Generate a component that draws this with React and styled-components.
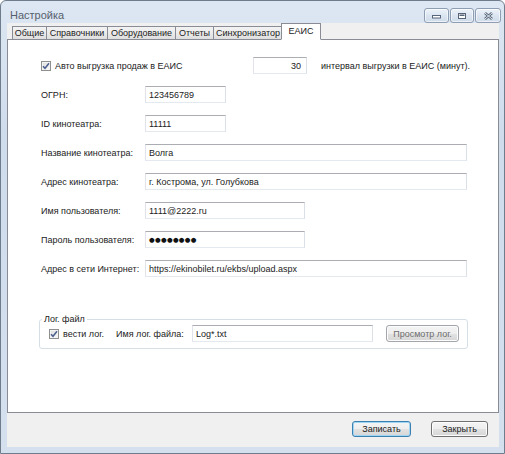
import React from 'react';
import styled, { createGlobalStyle } from 'styled-components';

const Global = createGlobalStyle`
  html, body { margin: 0; padding: 0; background: #fff; }
  body {
    font-family: "Liberation Sans", Arial, sans-serif;
    font-size: 9px;
    color: #222;
  }
  * { box-sizing: border-box; }
`;

const Window = styled.div`
  width: 505px;
  height: 454px;
  display: flex;
  flex-direction: column;
  background: linear-gradient(#dde7f3, #cfdcec 30%, #d4e0ee);
  border: 1px solid #6f7c8c;
  border-radius: 6px 6px 0 0;
  padding: 0 5px 6px 6px;
`;

const TitleBar = styled.div`
  height: 22px;
  display: flex;
  align-items: flex-start;
  justify-content: space-between;
`;

const Title = styled.div`
  margin: 8px 0 0 3px;
  font-size: 11px;
  color: #56606c;
`;

const CaptionGroup = styled.div`
  display: flex;
  margin: 7px -2px 0 0;
  gap: 1px;
`;

const CaptionButton = styled.div`
  width: ${p => p.$w}px;
  height: 15px;
  border: 1px solid #8d9db2;
  border-radius: 3px;
  background: linear-gradient(#eef3f9, #dbe5f1 50%, #cfdbe9);
  box-shadow: inset 0 0 0 1px rgba(255,255,255,0.6);
  display: flex;
  align-items: center;
  justify-content: center;
`;

const Client = styled.div`
  flex: 1;
  display: flex;
  flex-direction: column;
  background: #f0f0f0;
`;

const TabStrip = styled.div`
  height: 17px;
  display: flex;
  align-items: flex-end;
  padding-left: 5px;
  position: relative;
  z-index: 1;
`;

const Tab = styled.div`
  width: ${p => p.$w}px;
  height: ${p => (p.$active ? 17 : 14)}px;
  margin: ${p => (p.$active ? '0 -2px 0 -2px' : '0 0 0 -1px')};
  border: 1px solid #898c95;
  border-bottom: ${p => (p.$active ? '1px solid #fff' : '1px solid #898c95')};
  background: ${p => (p.$active ? '#fff' : 'linear-gradient(#f3f3f3, #ebebeb 50%, #dedede)')};
  display: flex;
  justify-content: center;
  align-items: ${p => (p.$active ? 'flex-start' : 'center')};
  padding-top: ${p => (p.$active ? '2px' : '0')};
  font-size: 9px;
  color: #222;
  white-space: nowrap;
  &:first-child { margin-left: 0; }
`;

const Panel = styled.div`
  flex: 1;
  background: #fff;
  border: 1px solid #898c95;
  margin-top: -1px;
  padding: 17px 0 0 33px;
`;

const Form = styled.div`
  display: flex;
  flex-direction: column;
  gap: 12px;
`;

const Row = styled.div`
  display: flex;
  align-items: center;
  height: 17px;
`;

const Label = styled.div`
  width: ${p => p.$w || 104}px;
  white-space: nowrap;
`;

const TextBox = styled.div`
  width: ${p => p.$w}px;
  height: 17px;
  border: 1px solid;
  border-color: #abadb3 #dbdfe6 #e3e9ef #e2e3ea;
  background: #fff;
  padding: 0 ${p => (p.$right ? 5 : 3)}px 0 3px;
  display: flex;
  align-items: center;
  justify-content: ${p => (p.$right ? 'flex-end' : 'flex-start')};
  white-space: nowrap;
  overflow: hidden;
  color: #222;
`;

const Dots = styled.span`
  font-family: "DejaVu Sans", sans-serif;
  font-size: 6.5px;
  letter-spacing: 0.3px;
  color: #111;
`;

const CheckItem = styled.label`
  width: ${p => p.$w}px;
  display: flex;
  align-items: center;
  gap: 4px;
  white-space: nowrap;
`;

const Box = styled.span`
  width: 10px;
  height: 10px;
  border: 1px solid #8e8f8f;
  background: linear-gradient(135deg, #dcdcdc, #fafafa);
  box-shadow: inset 0 0 0 1px #f4f4f4;
  display: inline-flex;
  align-items: center;
  justify-content: center;
  flex: none;
`;

const Note = styled.div`
  margin-left: 14px;
  white-space: nowrap;
`;

const Group = styled.fieldset`
  margin: 36px 0 0 -2px;
  width: 429px;
  border: 1px solid #d5dfe5;
  border-radius: 3px;
  padding: 0 0 6px 9px;
`;

const Legend = styled.legend`
  padding: 0 2px;
  margin-left: -7px;
  font-size: 9px;
  height: 12px;
  line-height: 12px;
  color: #222;
`;

const Button = styled.div`
  width: ${p => p.$w}px;
  height: ${p => p.$h || 16}px;
  margin-left: ${p => p.$ml || 0}px;
  border: 1px solid ${p => (p.$default ? '#3c7fb1' : p.$disabled ? '#a3a7ab' : '#707070')};
  border-radius: 3px;
  background: linear-gradient(#f4f4f4, #eeeeee 50%, #e2e2e2 51%, #d6d6d6);
  box-shadow: inset 0 0 0 1px ${p => (p.$default ? '#9fd6f3' : '#fcfcfc')};
  display: flex;
  align-items: center;
  justify-content: center;
  font-size: 9px;
  color: ${p => (p.$disabled ? '#6d6d6d' : '#222')};
  white-space: nowrap;
`;

const Footer = styled.div`
  height: 34px;
  display: flex;
  justify-content: flex-end;
  align-items: flex-start;
  gap: 20px;
  padding: 8px 11px 0 0;
`;

const Check = () => (
  <Box>
    <svg width="8" height="8" viewBox="0 0 8 8">
      <path d="M1 4.2 L3 6.3 L7 1.2" fill="none" stroke="#4b5f8e" strokeWidth="1.5" />
    </svg>
  </Box>
);

const tabs = [
  ['Общие', 35],
  ['Справочники', 62],
  ['Оборудование', 69],
  ['Отчеты', 39],
  ['Синхронизатор', 70],
  ['ЕАИС', 40],
];

export default function App() {
  return (
    <>
      <Global />
      <Window>
        <TitleBar>
          <Title>Настройка</Title>
          <CaptionGroup>
            <CaptionButton $w={25}>
              <svg width="11" height="7" viewBox="0 0 11 7">
                <rect x="1.5" y="3.5" width="8" height="2.5" fill="#fff" stroke="#56657a" />
              </svg>
            </CaptionButton>
            <CaptionButton $w={24}>
              <svg width="10" height="8" viewBox="0 0 10 8">
                <rect x="1.5" y="1.5" width="7" height="5" fill="#fff" stroke="#56657a" />
                <rect x="2.5" y="2.5" width="5" height="1.5" fill="#56657a" />
              </svg>
            </CaptionButton>
            <CaptionButton $w={26}>
              <svg width="11" height="8" viewBox="0 0 11 8">
                <path d="M2 1 L9 7 M9 1 L2 7" stroke="#56657a" strokeWidth="2.6" />
                <path d="M2 1 L9 7 M9 1 L2 7" stroke="#f6f8fb" strokeWidth="0.9" />
              </svg>
            </CaptionButton>
          </CaptionGroup>
        </TitleBar>
        <Client>
          <TabStrip>
            {tabs.map(([t, w]) => (
              <Tab key={t} $w={w} $active={t === 'ЕАИС'}>{t}</Tab>
            ))}
          </TabStrip>
          <Panel>
            <Form>
              <Row>
                <CheckItem $w={212}><Check />Авто выгрузка продаж в ЕАИС</CheckItem>
                <TextBox $w={54} $right>30</TextBox>
                <Note>интервал выгрузки в ЕАИС (минут).</Note>
              </Row>
              <Row><Label>ОГРН:</Label><TextBox $w={81}>123456789</TextBox></Row>
              <Row><Label>ID кинотеатра:</Label><TextBox $w={81}>11111</TextBox></Row>
              <Row><Label>Название кинотеатра:</Label><TextBox $w={322}>Волга</TextBox></Row>
              <Row><Label>Адрес кинотеатра:</Label><TextBox $w={322}>г. Кострома, ул. Голубкова</TextBox></Row>
              <Row><Label>Имя пользователя:</Label><TextBox $w={160}>1111@2222.ru</TextBox></Row>
              <Row><Label>Пароль пользователя:</Label><TextBox $w={160}><Dots>●●●●●●●●</Dots></TextBox></Row>
              <Row><Label>Адрес в сети Интернет:</Label><TextBox $w={322}>https://ekinobilet.ru/ekbs/upload.aspx</TextBox></Row>
            </Form>
            <Group>
              <Legend>Лог. файл</Legend>
              <Row>
                <CheckItem $w={67}><Check />вести лог.</CheckItem>
                <Label $w={76}>Имя лог. файла:</Label>
                <TextBox $w={181}>Log*.txt</TextBox>
                <Button $w={73} $h={17} $ml={13} $disabled>Просмотр лог.</Button>
              </Row>
            </Group>
          </Panel>
          <Footer>
            <Button $w={59} $default>Записать</Button>
            <Button $w={57}>Закрыть</Button>
          </Footer>
        </Client>
      </Window>
    </>
  );
}
